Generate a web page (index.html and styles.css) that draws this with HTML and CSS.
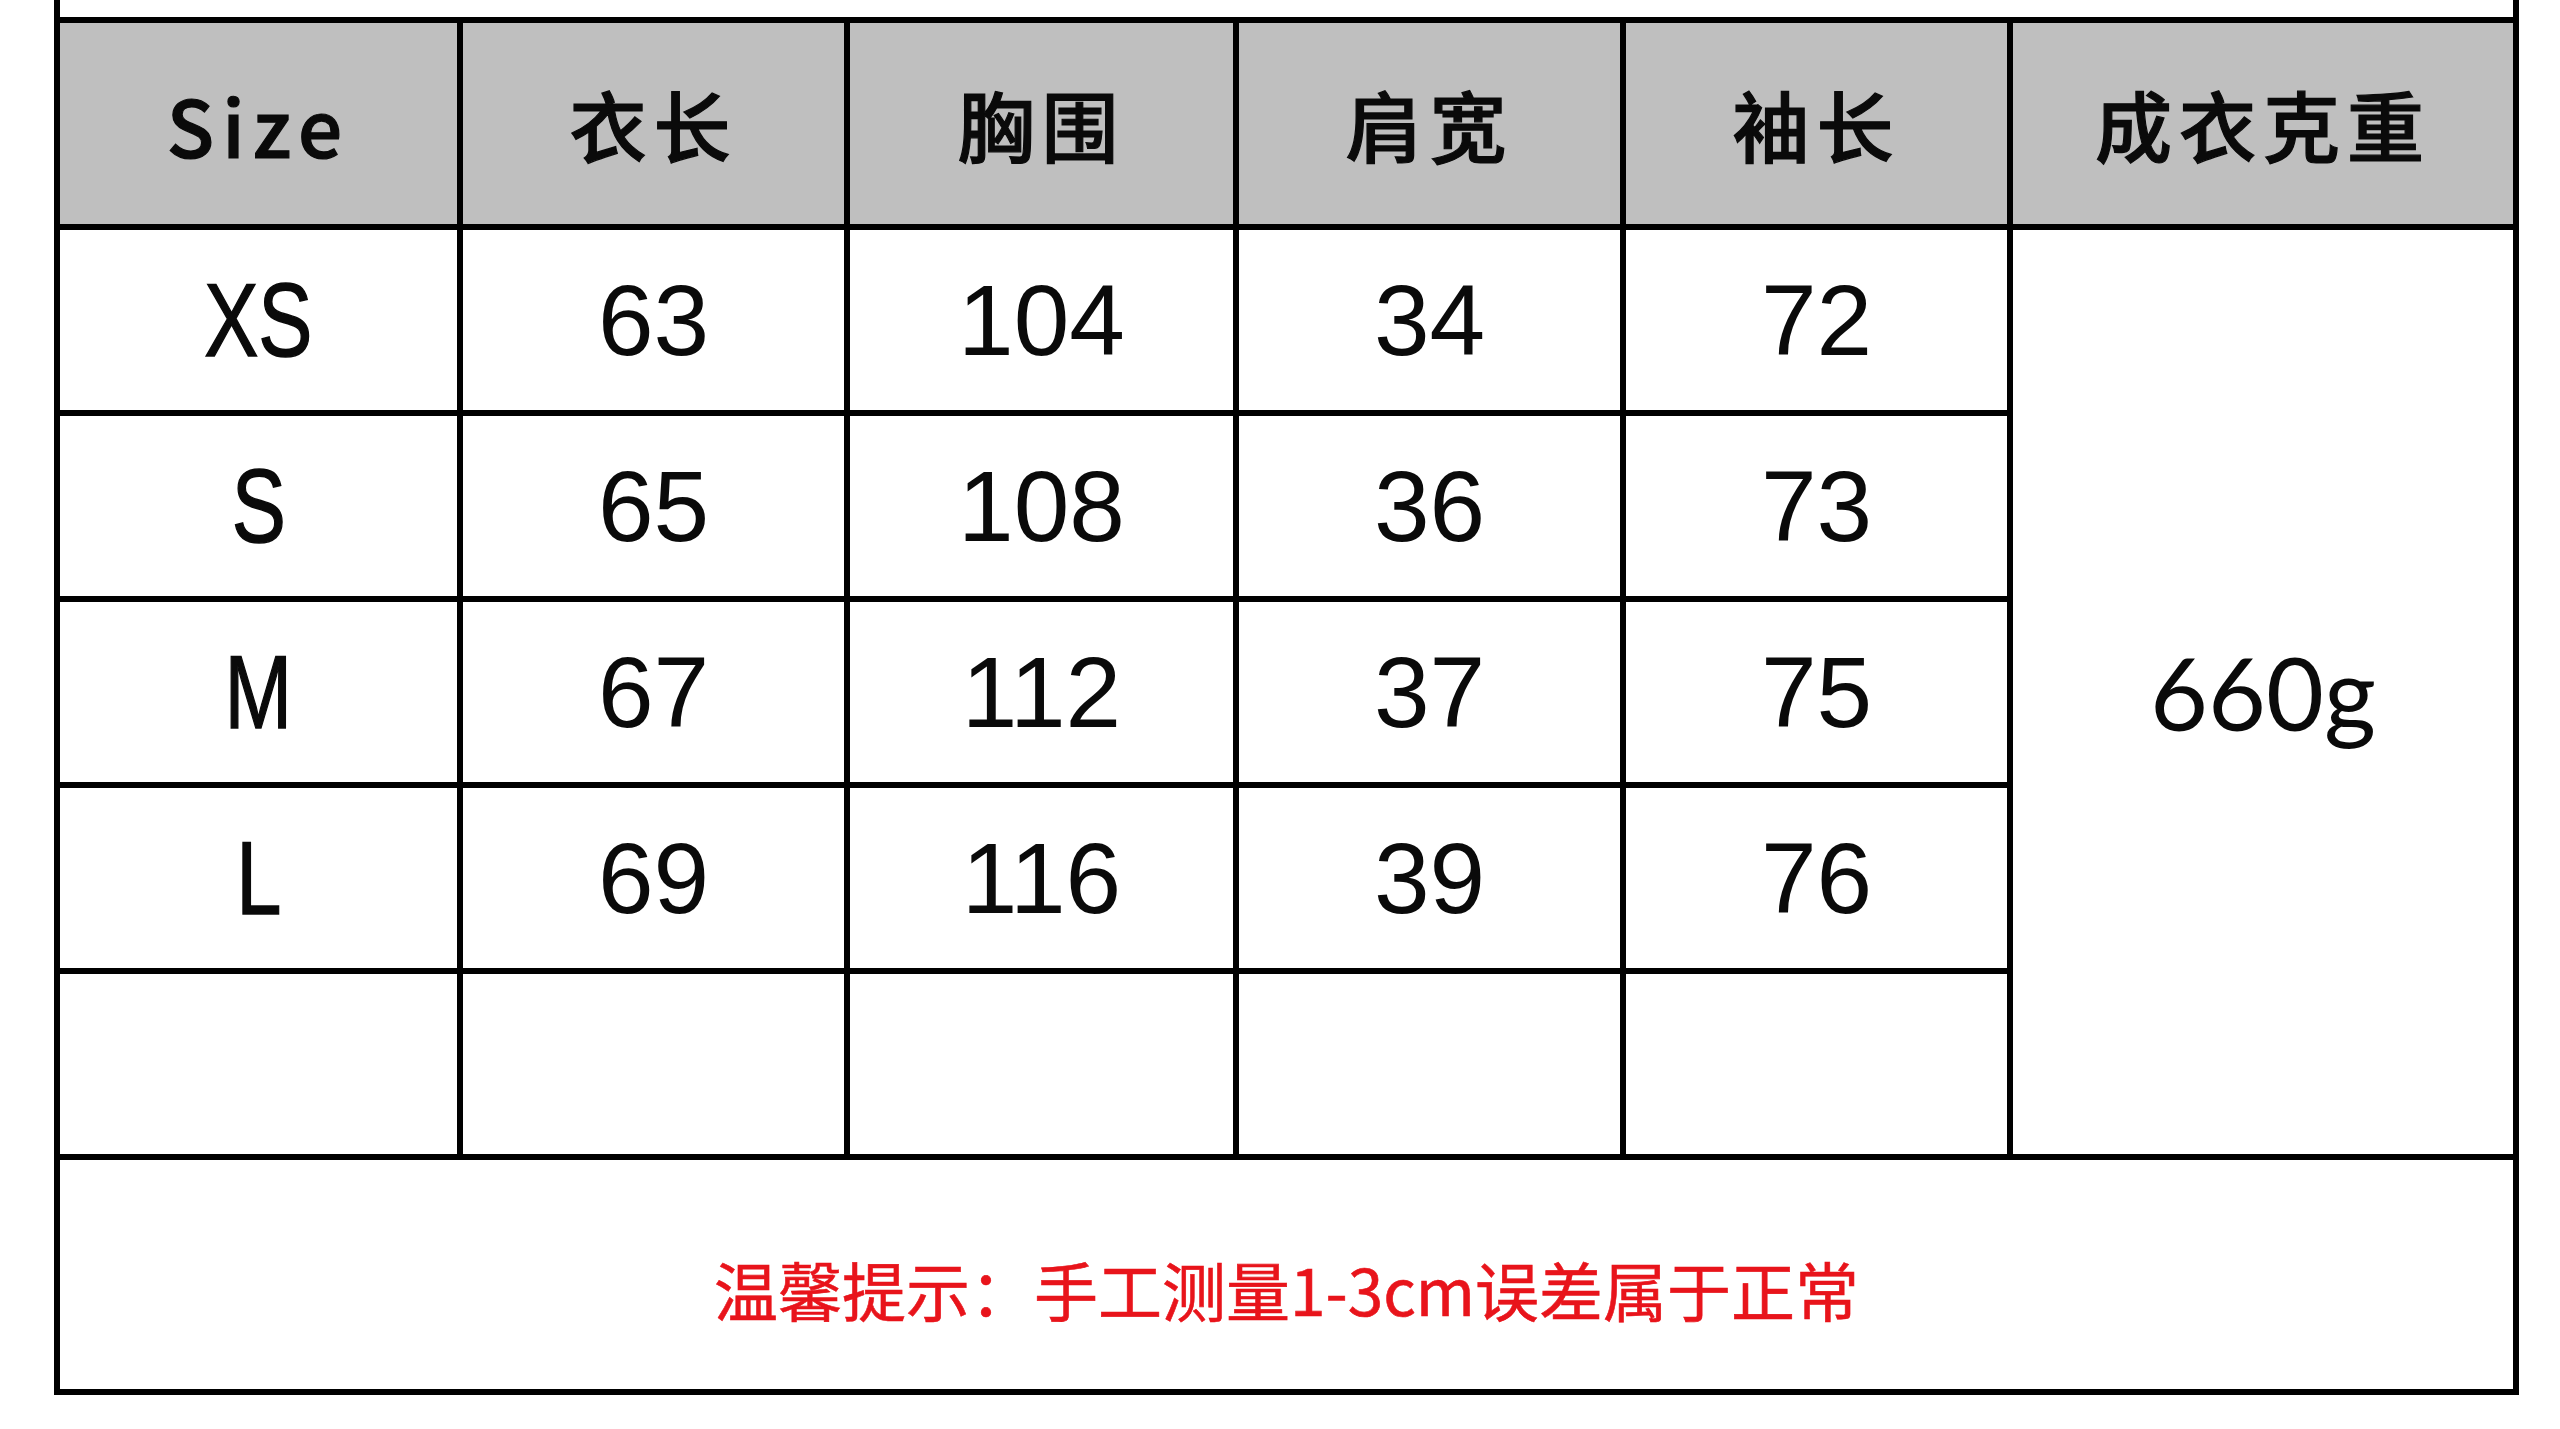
FILE: index.html
```html
<!DOCTYPE html>
<html lang="zh-CN">
<head>
<meta charset="utf-8">
<title>尺码表</title>
<link rel="stylesheet" href="styles.css">
</head>
<body>
<div class="sheet">
  <div class="prev"></div>
  <table class="size-table">
    <colgroup>
      <col class="c1"><col class="c2"><col class="c3"><col class="c4"><col class="c5"><col class="c6">
    </colgroup>
    <thead>
      <tr class="head">
        <th class="latin-head">Size</th>
        <th>衣长</th>
        <th>胸围</th>
        <th>肩宽</th>
        <th>袖长</th>
        <th>成衣克重</th>
      </tr>
    </thead>
    <tbody>
      <tr class="row">
        <td class="size"><span class="narrow">XS</span></td><td class="num">63</td><td class="num">104</td><td class="num">34</td><td class="num">72</td>
        <td class="weight" rowspan="5">660g</td>
      </tr>
      <tr class="row">
        <td class="size"><span class="narrow">S</span></td><td class="num">65</td><td class="num">108</td><td class="num">36</td><td class="num">73</td>
      </tr>
      <tr class="row">
        <td class="size"><span class="narrow">M</span></td><td class="num">67</td><td class="num">112</td><td class="num">37</td><td class="num">75</td>
      </tr>
      <tr class="row">
        <td class="size"><span class="narrow">L</span></td><td class="num">69</td><td class="num">116</td><td class="num">39</td><td class="num">76</td>
      </tr>
      <tr class="row">
        <td></td><td></td><td></td><td></td><td></td>
      </tr>
      <tr class="note-row">
        <td class="note" colspan="6">温馨提示：手工测量1-3cm误差属于正常</td>
      </tr>
    </tbody>
  </table>
</div>
</body>
</html>
```
FILE: styles.css
```css
html, body {
  margin: 0;
  padding: 0;
  background: #ffffff;
}

body {
  width: 2560px;
  height: 1429px;
  overflow: hidden;
  font-family: "Noto Sans CJK SC", sans-serif;
  color: #0a0a0a;
}

.sheet {
  margin-left: 54px;
  width: 2465px;
}

.prev {
  height: 17px;
  border-left: 6px solid #000;
  border-right: 6px solid #000;
}

.size-table {
  width: 2465px;
  border-collapse: collapse;
  table-layout: fixed;
}

.size-table th,
.size-table td {
  border: 6px solid #000;
  padding: 0;
  text-align: center;
  vertical-align: middle;
}

.c1 { width: 403px; }
.c2 { width: 387px; }
.c3 { width: 389px; }
.c4 { width: 387px; }
.c5 { width: 387px; }
.c6 { width: 506px; }

.head {
  height: 207px;
}

.head th {
  background: #bfbfbf;
  font-family: "Noto Sans CJK SC", sans-serif;
  font-weight: 500;
  font-size: 77px;
  letter-spacing: 7px;
  line-height: 1;
  -webkit-text-stroke: 1.2px #0a0a0a;
}

.head .latin-head {
  font-size: 78px;
  letter-spacing: 8px;
}

.row {
  height: 186px;
}

.size {
  font-family: "Liberation Sans", Arial, sans-serif;
  font-size: 104px;
  line-height: 1;
}

.narrow {
  display: inline-block;
  transform: scaleX(0.78);
  -webkit-text-stroke: 1.5px #0a0a0a;
}

.num {
  font-family: "Liberation Sans", Arial, sans-serif;
  font-size: 100px;
  line-height: 1;
}

.weight {
  font-family: Lato, "Liberation Sans", sans-serif;
  font-size: 100px;
  line-height: 1;
}

.note-row {
  height: 235px;
}

.note {
  color: #e8141b;
  font-family: "Noto Sans CJK SC", sans-serif;
  font-weight: 400;
  font-size: 64px;
  line-height: 1;
  padding-top: 26px !important;
  -webkit-text-stroke: 0.6px #e8141b;
}
```
